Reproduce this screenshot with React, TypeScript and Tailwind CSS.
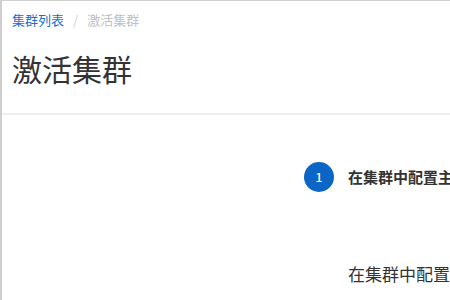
import React from "react";

export default function App() {
  return (
    <div
      className="w-[450px] h-[300px] overflow-hidden bg-white border-l-2 border-t border-[#cfcfcf] text-[#333]"
      style={{ fontFamily: '"Noto Sans CJK SC", "Noto Sans", sans-serif' }}
    >
      <div className="pl-[10px] pt-[9px] h-[114px] border-b-2 border-[#eeeeee]">
        <div className="flex items-center text-[13px] leading-[20px]">
          <span className="text-[#1a6fc9]">集群列表</span>
          <span className="mx-[9px] text-[#d0d0d0]">/</span>
          <span className="text-[#c0c0c0]">激活集群</span>
        </div>
        <div className="mt-[18px] text-[30px] leading-[40px] text-[#333]">激活集群</div>
      </div>
      <div className="pl-[302px] pt-[47px]">
        <div className="flex items-center">
          <div className="w-[30px] h-[30px] shrink-0 rounded-full bg-[#0b65c6] flex items-center justify-center text-white text-[12px] font-medium">
            1
          </div>
          <div className="ml-[14px] text-[15px] font-semibold whitespace-nowrap text-[#333]">在集群中配置主机</div>
        </div>
        <div className="ml-[44px] mt-[69px] text-[17px] whitespace-nowrap text-[#333]">在集群中配置</div>
      </div>
    </div>
  );
}
